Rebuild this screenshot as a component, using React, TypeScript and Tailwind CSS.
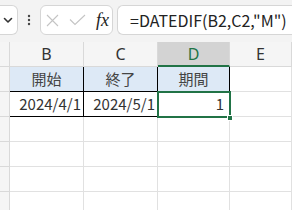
import React from "react";

const jp = "font-['Noto_Sans_CJK_JP','Noto_Sans',sans-serif]";

function TopBar() {
    return (
        <div className="h-[42px] bg-[#f3f3f3] flex items-start pt-[5px]">
            <div className="w-[18px] h-[30px] bg-white border border-l-0 border-[#d6d6d6] rounded-r-md flex items-center justify-center">
                <svg width="10" height="7" viewBox="0 0 10 7" className="ml-[-1px]">
                    <path d="M1.5 1.5 L5 5 L8.5 1.5" fill="none" stroke="#333" strokeWidth="1.6" strokeLinecap="round" strokeLinejoin="round"/>
                </svg>
            </div>
            <div className="w-[22px] h-[30px] flex items-center justify-center">
                <svg width="4" height="12" viewBox="0 0 4 12">
                    <circle cx="2" cy="2" r="1.2" fill="#444"/>
                    <circle cx="2" cy="6" r="1.2" fill="#444"/>
                    <circle cx="2" cy="10" r="1.2" fill="#444"/>
                </svg>
            </div>
            <div className="w-[73px] h-[30px] bg-white border border-[#d6d6d6] rounded-md flex items-center">
                <svg width="13" height="13" viewBox="0 0 13 13" className="ml-[5px]">
                    <path d="M1 1 L12 12 M12 1 L1 12" stroke="#c4c4c4" strokeWidth="1.1" fill="none"/>
                </svg>
                <svg width="17" height="12" viewBox="0 0 17 12" className="ml-[10px]">
                    <path d="M1 5.5 L6 10.5 L16 1" stroke="#c4c4c4" strokeWidth="1.1" fill="none"/>
                </svg>
                <span className="ml-[10px] font-['Liberation_Serif',serif] italic text-[18px] leading-none text-[#222]">fx</span>
            </div>
            <div className="flex-1 ml-[4px] h-[30px] bg-white border border-r-0 border-[#d6d6d6] rounded-l-md flex items-center pl-[12px] overflow-hidden">
                <span className={`${jp} text-[16px] text-[#222] whitespace-nowrap`}>=DATEDIF(B2,C2,"M")</span>
            </div>
        </div>
    );
}

const cols = ["B", "C", "D", "E"];

function Sheet() {
    return (
        <div className="grid grid-cols-[10px_74px_74px_72px_1fr] bg-white">
            {/* column headers */}
            <div className="h-[25px] bg-[#f5f5f5] border-r border-b border-[#d9d9d9]" />
            {cols.map((c) => (
                <div
                    key={c}
                    className={
                        c === "D"
                            ? "h-[25px] bg-[#d3d3d3] border-r border-[#d9d9d9] border-b-2 border-b-[#217346] flex items-center justify-center font-['Noto_Sans',sans-serif] text-[16px] text-[#217346]"
                            : "h-[25px] bg-[#f5f5f5] border-r border-b border-[#d9d9d9] flex items-center justify-center font-['Noto_Sans',sans-serif] text-[16px] text-[#333]"
                    }
                >
                    {c}
                </div>
            ))}

            {/* row 1 */}
            <div className="h-[25px] bg-[#f5f5f5] border-r border-b border-[#d9d9d9]" />
            {["開始", "終了", "期間"].map((t) => (
                <div key={t} className={`h-[25px] bg-[#dde9f6] border-r border-b border-black flex items-center justify-center ${jp} text-[15px] text-[#444]`}>
                    {t}
                </div>
            ))}
            <div className="h-[25px] border-r border-b border-[#e1e1e1]" />

            {/* row 2 */}
            <div className="h-[25px] bg-[#f5f5f5] border-r border-b border-[#d9d9d9]" />
            {["2024/4/1", "2024/5/1"].map((t) => (
                <div key={t} className={`h-[25px] border-r border-b border-black flex items-center justify-end pr-[2px] ${jp} text-[15px] text-[#333]`}>
                    {t}
                </div>
            ))}
            <div className={`relative h-[25px] border-r border-b border-black flex items-center justify-end pr-[5px] ${jp} text-[15px] text-[#333]`}>
                1
                <div className="absolute left-[-1px] top-[-1px] right-[-2px] bottom-[-2px] border-2 border-[#217346]" />
                <div className="absolute right-[-4px] bottom-[-5px] w-[6px] h-[6px] bg-[#217346] border border-white" />
            </div>
            <div className="h-[25px] border-r border-b border-[#e1e1e1]" />

            {[3, 4, 5, 6].map((r) => (
                <React.Fragment key={r}>
                    <div className="h-[25px] bg-[#f5f5f5] border-r border-b border-[#d9d9d9]" />
                    <div className="h-[25px] border-r border-b border-[#e1e1e1]" />
                    <div className="h-[25px] border-r border-b border-[#e1e1e1]" />
                    <div className="h-[25px] border-r border-b border-[#e1e1e1]" />
                    <div className="h-[25px] border-r border-b border-[#e1e1e1]" />
                </React.Fragment>
            ))}
        </div>
    );
}

export default function App() {
    return (
        <div className="w-[292px] h-[210px] overflow-hidden bg-white">
            <TopBar />
            <Sheet />
        </div>
    );
}
